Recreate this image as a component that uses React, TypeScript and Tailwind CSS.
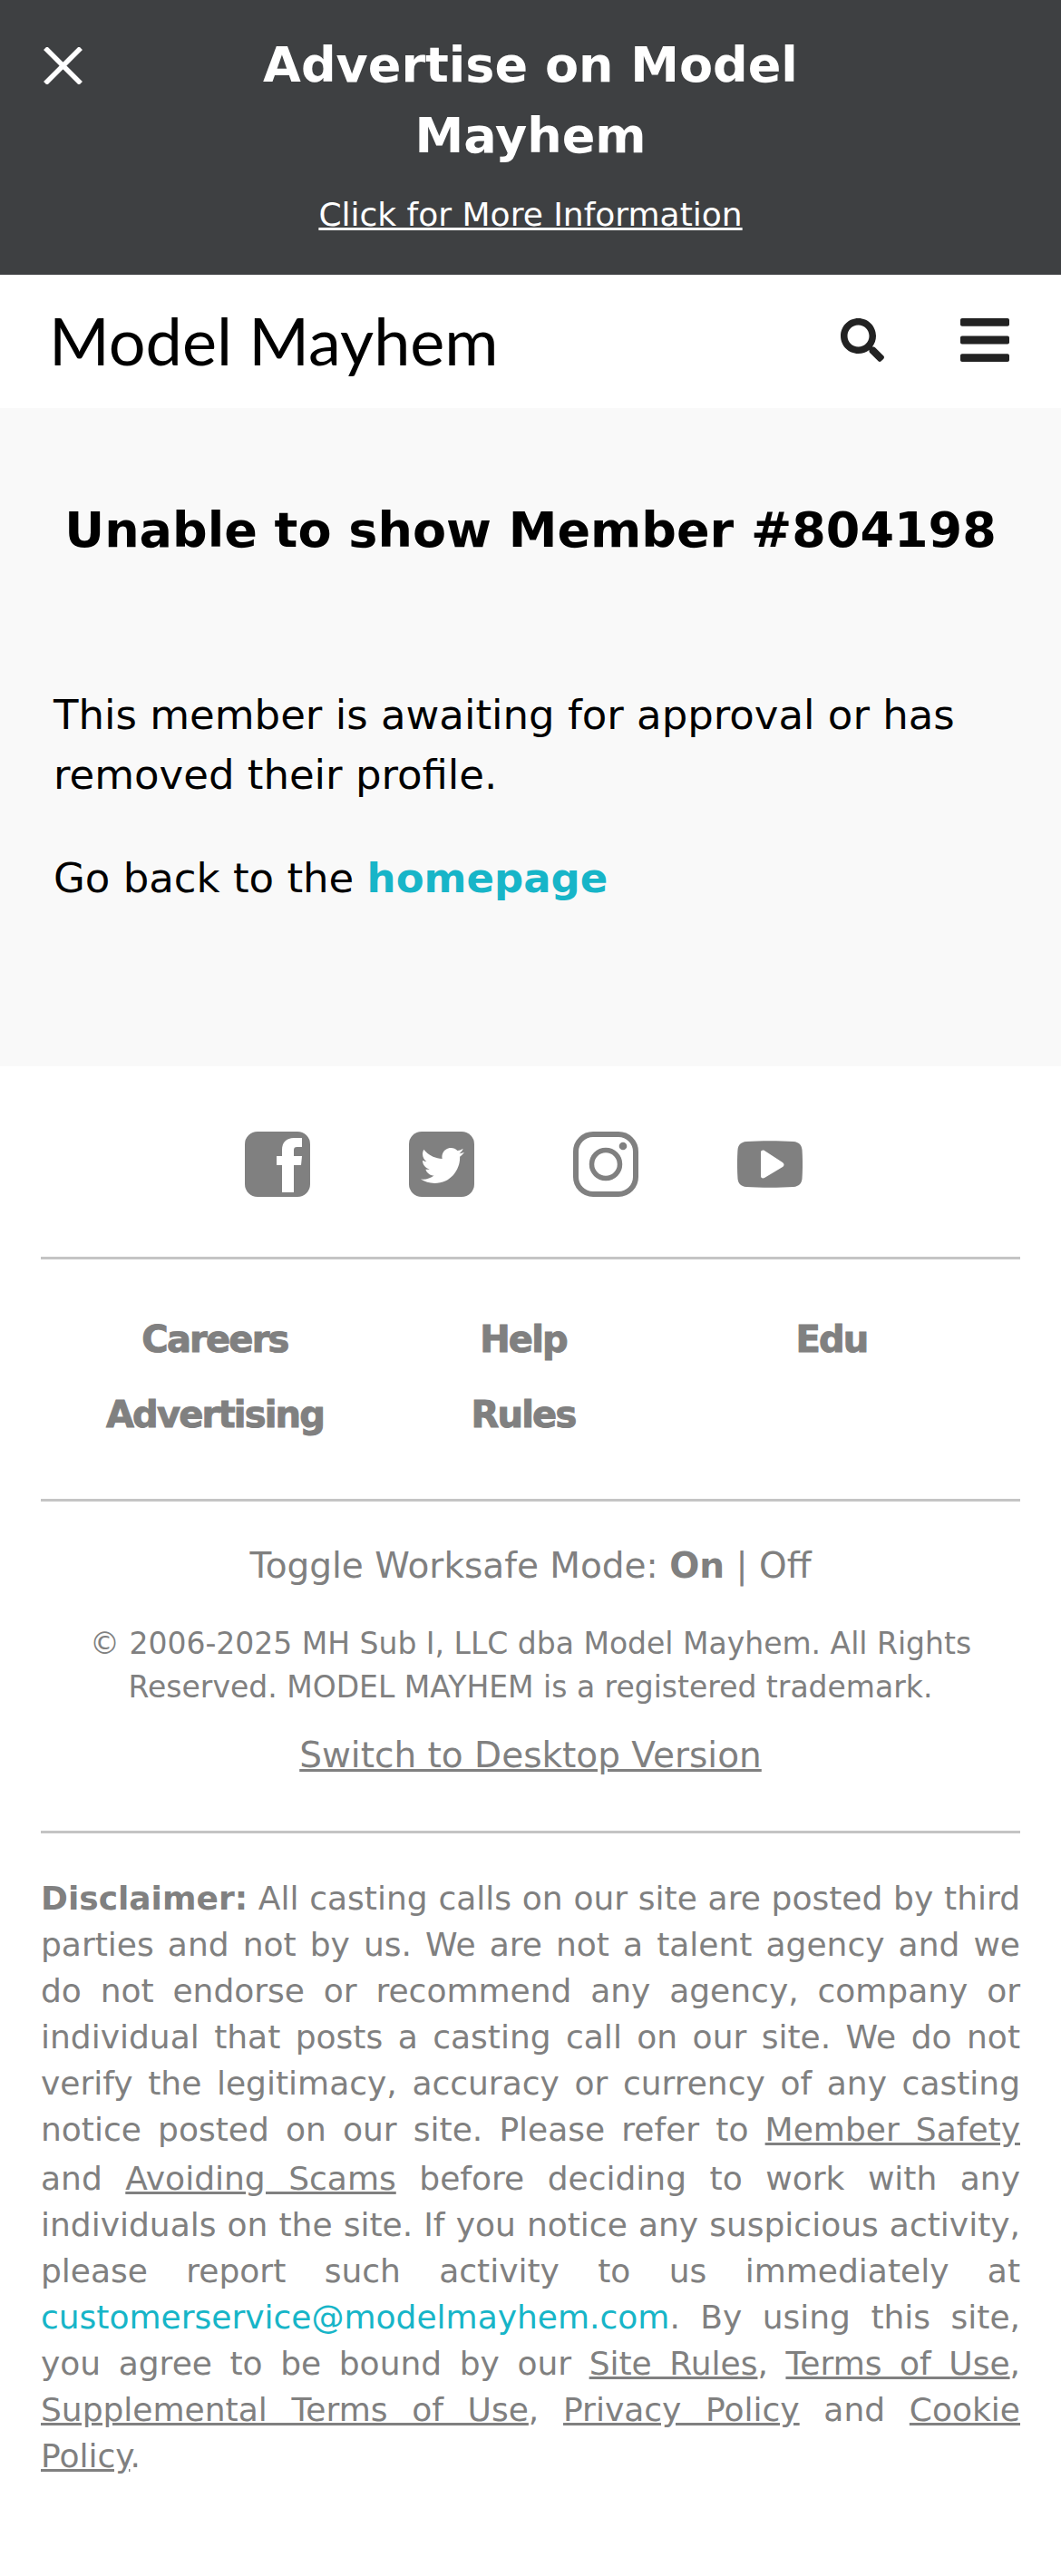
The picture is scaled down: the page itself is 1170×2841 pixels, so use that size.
import React from "react";
import { FaSearch, FaBars } from "react-icons/fa";

const U = ({ children }: { children: React.ReactNode }) => <a className="underline">{children}</a>;

const BIRD =
  "M459.37 151.716c.325 4.548.325 9.097.325 13.645 0 138.72-105.583 298.558-298.558 298.558-59.452 0-114.68-17.219-161.137-47.106 8.447.974 16.568 1.299 25.34 1.299 49.055 0 94.213-16.568 130.274-44.832-46.132-.975-84.792-31.188-98.112-72.772 6.498.974 12.995 1.624 19.818 1.624 9.421 0 18.843-1.3 27.614-3.573-48.081-9.747-84.143-51.98-84.143-102.985v-1.299c13.969 7.797 30.214 12.67 47.431 13.319-28.264-18.843-46.781-51.005-46.781-87.391 0-19.492 5.197-37.36 14.294-52.954 51.655 63.675 129.3 105.258 216.365 109.807-1.624-7.797-2.599-15.918-2.599-24.04 0-57.828 46.782-104.934 104.934-104.934 30.213 0 57.502 12.67 76.67 33.137 23.715-4.548 46.456-13.32 66.599-25.34-7.798 24.366-24.366 44.833-46.132 57.827 21.117-2.273 41.584-8.122 60.426-16.243-14.292 20.791-32.161 39.308-52.628 54.253z";

export default function App() {
  return (
    <div className="min-h-[2841px] bg-white font-['DejaVu_Sans',sans-serif]">
      <div className="relative h-[303px] bg-[#3e4042] px-[270px] pt-[33px] text-center text-white">
        <svg className="absolute left-[48px] top-[52px] h-[41px] w-[43px]" viewBox="0 0 43 41" fill="none" stroke="white" strokeWidth="5.5">
          <path d="M2 1 L41 40 M41 1 L2 40" />
        </svg>
        <div className="-mx-[10px] text-[54px] font-bold leading-[78px]">Advertise on Model Mayhem</div>
        <a className="mt-[21px] block text-[36px] leading-[54px] underline">Click for More Information</a>
      </div>

      <div className="flex h-[147px] items-center bg-white pb-[3px] pl-[54px] pr-[57px]">
        <div className="flex-1 font-['Lato',sans-serif] text-[72px] font-normal leading-none text-black">Model Mayhem</div>
        <FaSearch className="h-[48px] w-[48px] text-[#222]" />
        <FaBars className="ml-[84px] h-[48px] w-[54px] text-[#222]" viewBox="0 60 448 392" preserveAspectRatio="none" />
      </div>

      <div className="h-[726px] bg-[#f9f9f9] px-[59px] pt-[99px] text-black">
        <h1 className="whitespace-nowrap text-center text-[54px] font-bold leading-[72px]">Unable to show Member #804198</h1>
        <p className="mt-[135px] text-[45px] leading-[66px]">This member is awaiting for approval or has removed their profile.</p>
        <p className="mt-[48px] text-[45px] leading-[66px]">
          Go back to the <a className="font-bold text-[#17b5c8]">homepage</a>
        </p>
      </div>

      <div className="px-[45px] text-[#808080]">
        <div className="flex h-[213px] items-start justify-center gap-[109px] border-b-[3px] border-[#c4c4c4] pr-[16px] pt-[72px]">
          <a>
            <svg viewBox="0 0 72 72" className="block h-[72px] w-[72px]">
              <path fill="currentColor" fillRule="evenodd" d="M14 0 H58 A14 14 0 0 1 72 14 V58 A14 14 0 0 1 58 72 H14 A14 14 0 0 1 0 58 V14 A14 14 0 0 1 14 0 Z M41 67 H54 V37 H62 L63 27 H54 V20.500 C54 18 55 17 57.500 17 H63 V7 H54 C46 7 41 12 41 20 V27 H35 V37 H41 Z" />
            </svg>
          </a>
          <a>
            <svg viewBox="0 0 72 72" className="block h-[72px] w-[72px]">
              <rect width="72" height="72" rx="14" fill="currentColor" />
              <path fill="white" transform="translate(13 13.500) scale(0.0938)" d={BIRD} />
            </svg>
          </a>
          <a>
            <svg viewBox="0 0 72 72" className="block h-[72px] w-[72px]" fill="none" stroke="currentColor">
              <rect x="3" y="3" width="66" height="66" rx="19" strokeWidth="6" />
              <circle cx="36" cy="36" r="15.500" strokeWidth="5.500" />
              <circle cx="55" cy="16" r="4.300" fill="currentColor" stroke="none" />
            </svg>
          </a>
          <a>
            <svg viewBox="0 0 72 52" className="mt-[10px] block h-[52px] w-[72px]">
              <path fill="currentColor" fillRule="evenodd" d="M10 1 C25 0 47 0 62 1 C68 1.500 71 5 71.500 10 C72.200 20 72.200 32 71.500 42 C71 47 68 50.500 62 51 C47 52 25 52 10 51 C4 50.500 1 47 0.500 42 C-0.200 32 -0.200 20 0.500 10 C1 5 4 1.500 10 1 Z M26 13 C26 10.500 28.500 10 30 11 L50 24 C52 25.500 52 27.500 50 29 L30 41 C28.500 42 26 41.500 26 39 Z" />
            </svg>
          </a>
        </div>

        <div className="border-b-[3px] border-[#c4c4c4] pb-[66px] pt-[61px]">
          <div className="ml-[22px] grid w-[1020px] grid-cols-3 gap-y-[29px] text-center text-[40px] font-bold leading-[54px] tracking-[-1.8px] [-webkit-text-stroke:1px_#808080]">
            <a>Careers</a>
            <a>Help</a>
            <a>Edu</a>
            <a>Advertising</a>
            <a>Rules</a>
          </div>
        </div>

        <div className="border-b-[3px] border-[#c4c4c4] pb-[56px] text-center">
          <div className="pt-[41px] text-[39px] leading-[60px]">
            Toggle Worksafe Mode: <b>On</b> | Off
          </div>
          <div className="mt-[32px] text-[33px] leading-[48px]">
            © 2006-2025 MH Sub I, LLC dba Model Mayhem. All Rights Reserved. MODEL MAYHEM is a registered trademark.
          </div>
          <a className="mt-[24px] block text-[39px] leading-[54px] underline">Switch to Desktop Version</a>
        </div>

        <p className="mt-[46px] text-justify text-[36px] leading-[51px]">
          <b>Disclaimer:</b> All casting calls on our site are posted by third parties and not by us. We are not a talent agency and we do not endorse or recommend any agency, company or individual that posts a casting call on our site. We do not verify the legitimacy, accuracy or currency of any casting notice posted on our site. Please refer to <U>Member Safety</U> <span className="inline-block pt-[3px]">and</span> <U>Avoiding Scams</U> before deciding to work with any individuals on the site. If you notice any suspicious activity, please report such activity to us immediately at <a className="text-[#17b5c8]">customerservice@modelmayhem.com</a>. By using this site, you agree to be bound by our <U>Site Rules</U>, <U>Terms of Use</U>, <U>Supplemental Terms of Use</U>, <U>Privacy Policy</U> and <U>Cookie Policy</U>.
        </p>
      </div>
    </div>
  );
}
